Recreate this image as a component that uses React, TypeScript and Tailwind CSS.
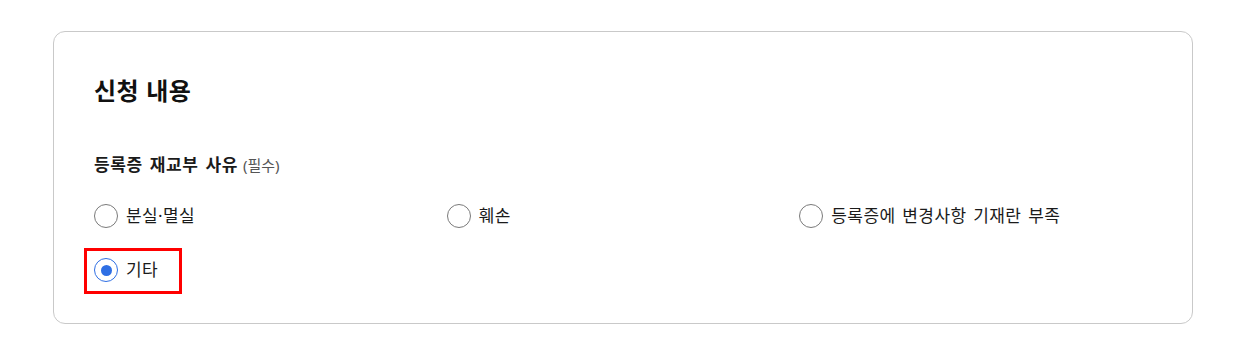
import React from "react";

const font = { fontFamily: '"Noto Sans", "Noto Sans CJK KR", sans-serif' };

function Radio({ label, checked }: { label: string; checked?: boolean }) {
  return (
    <label className="flex items-center gap-2 h-6">
      {checked ? (
        <span className="flex items-center justify-center w-6 h-6 rounded-full border-[1.5px] border-[#2f6fe4] bg-white">
          <span className="w-[11px] h-[11px] rounded-full bg-[#2f6fe4]" />
        </span>
      ) : (
        <span className="w-6 h-6 rounded-full border-[1.5px] border-[#7a7a7a] bg-white" />
      )}
      <span className="text-[17px] leading-6 tracking-[0.4px] [word-spacing:2px] text-[#1b1b1b]">{label}</span>
    </label>
  );
}

export default function App() {
  return (
    <div className="w-[1242px] h-[340px] bg-white pt-[31px] pl-[53px]" style={font}>
      <div className="w-[1140px] h-[293px] rounded-[12px] border border-[#c9c9c9] px-10 pt-[43px]">
        <h2 className="text-[24px] leading-8 font-bold tracking-[0.3px] [word-spacing:1px] text-[#111]">신청 내용</h2>
        <div className="mt-[46px] flex items-baseline gap-[5px]">
          <span className="text-[17px] leading-6 font-bold tracking-[0.6px] [word-spacing:2px] text-[#1b1b1b]">등록증 재교부 사유</span>
          <span className="text-[15px] text-[#555]">(필수)</span>
        </div>
        <div className="mt-[27px] grid grid-cols-3 gap-y-[30px]">
          <Radio label="분실·멸실" />
          <Radio label="훼손" />
          <Radio label="등록증에 변경사항 기재란 부족" />
          <div className="relative">
            <Radio label="기타" checked />
            <span className="absolute left-[-10px] top-[-10px] w-[98px] h-[46px] border-[3px] border-[#ff0000] pointer-events-none" />
          </div>
        </div>
      </div>
    </div>
  );
}
